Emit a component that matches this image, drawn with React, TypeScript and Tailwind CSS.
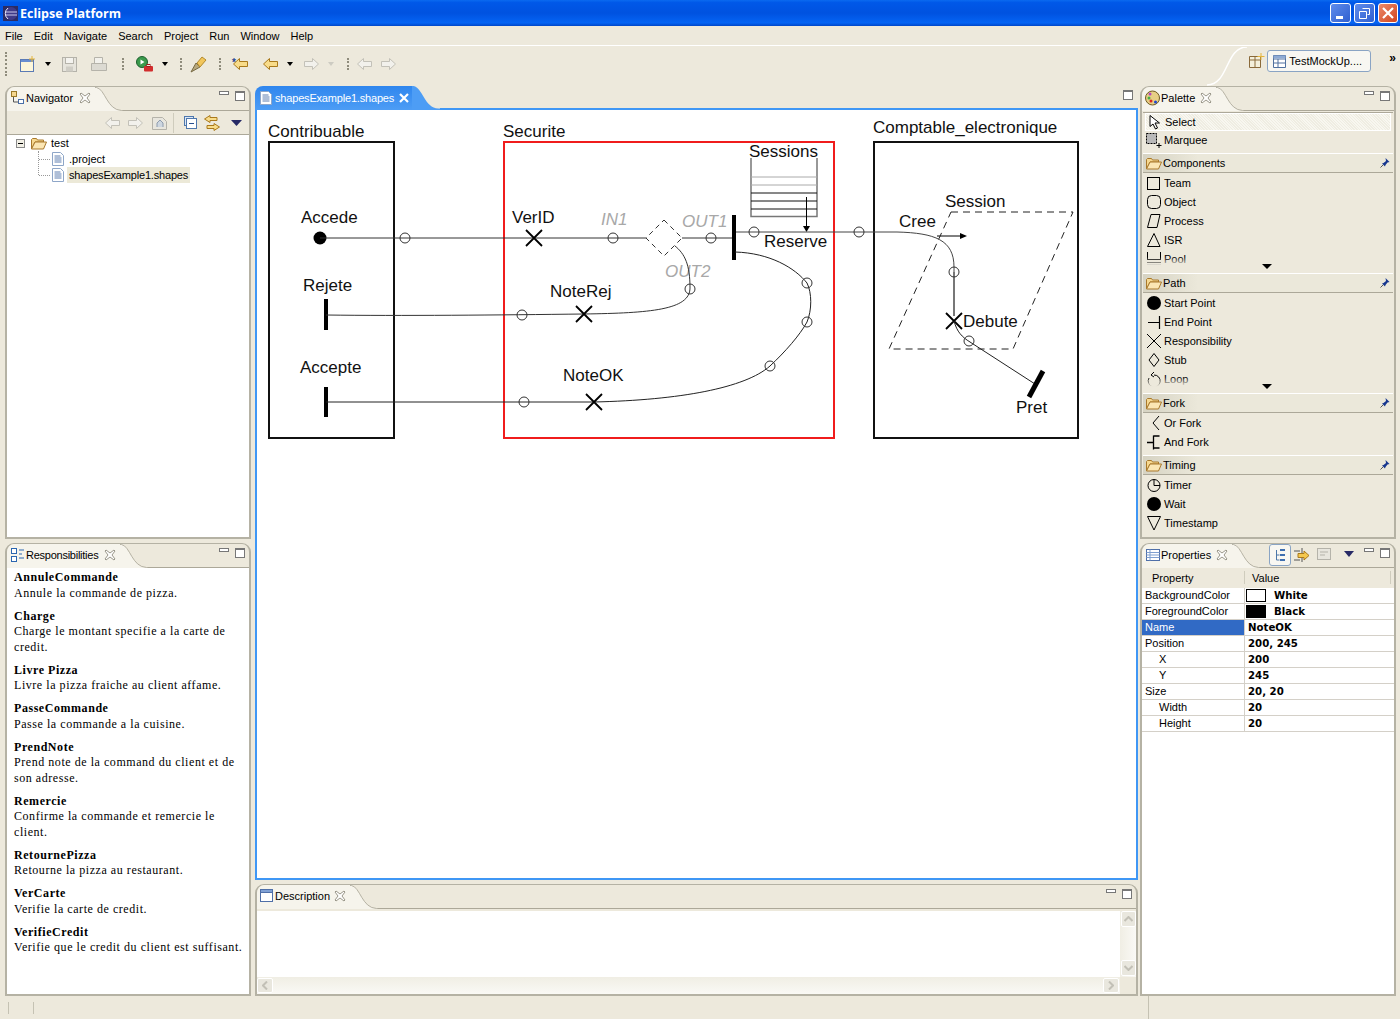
import React from "react";

const Grip = () => (
  <span className="mx-[4px] h-[24px] w-[2px] border-l-2 border-dotted border-[#8f8c7c]" />
);

const DropArrow = ({ color = "#000", w = 6 }: { color?: string; w?: number }) => (
  <svg width={w} height={w > 6 ? 6 : 4} viewBox="0 0 7 4" preserveAspectRatio="none" className="shrink-0">
    <path d="M0 0h7L3.5 4z" fill={color} />
  </svg>
);

const CloseX = () => (
  <svg width="12" height="12" viewBox="0 0 12 12" className="ml-auto shrink-0">
    <path
      d="M1 2l1-1 4 3 4-3 1 1-3 4 3 4-1 1-4-3-4 3-1-1 3-4z"
      fill="#fff"
      stroke="#9a978a"
    />
  </svg>
);

const MinMax = () => (
  <div className="flex items-start gap-[6px]">
    <span className="h-[4px] w-[10px] border border-[#777] bg-white" />
    <span className="h-[10px] w-[10px] border border-[#777] border-t-2 bg-white" />
  </div>
);

const FileIcon = () => (
  <svg width="12" height="14" viewBox="0 0 12 14" className="shrink-0">
    <path d="M.5.5h8l3 3v10H.5z" fill="#fff" stroke="#8ea6c8" />
    <path d="M2.5 4h6M2.5 6h7M2.5 8h7M2.5 10h7" stroke="#5f7fb0" />
  </svg>
);

const Folder = ({ w = 16 }: { w?: number }) => (
  <svg width={w} height="13" viewBox="0 0 16 13" className="shrink-0">
    <path d="M.5 12V2.5l1-1h4l1 1.500h6V5H4L.5 12z" fill="#f6d890" stroke="#a9792c" />
    <path d="M.5 12L4 5h11.500l-3 7z" fill="#fbe6b4" stroke="#a9792c" />
  </svg>
);

const Pin = () => (
  <svg width="10" height="10" viewBox="0 0 10 10" className="shrink-0">
    <path d="M5.500 0l4 4-2 .5-2 2.500-.5 1.500-3-3 1.500-.5L6 3z" fill="#17378f" />
    <path d="M.5 9.500l2.500-2.500" stroke="#555" />
  </svg>
);

const ArrowIcon = ({ dir, fill, stroke }: { dir: "l" | "r"; fill: string; stroke: string }) => (
  <svg width="15" height="12" viewBox="0 0 15 12" className="shrink-0">
    <path
      d={dir === "l" ? "M.5 6L6.500.5V3.500h8v5h-8v3z" : "M14.500 6L8.500.5V3.500h-8v5h8v3z"}
      fill={fill}
      stroke={stroke}
    />
  </svg>
);

const TabHead = ({
  icon,
  label,
  width,
  tight,
  right,
}: {
  icon: React.ReactNode;
  label: string;
  width: number;
  tight?: boolean;
  right?: React.ReactNode;
}) => (
  <div className="flex h-[24px] shrink-0">
    <div
      className="flex h-full items-center rounded-tl-[8px] bg-[#f6f4ec] pb-[3px] pl-[3px] pr-[4px]"
      style={{ width }}
    >
      {icon}
      <span className={`whitespace-nowrap ${tight ? "tracking-[-0.25px]" : ""}`}>{label}</span>
      <CloseX />
    </div>
    <svg width="28" height="24" viewBox="0 0 38 24" preserveAspectRatio="none" className="shrink-0">
      <path d="M0 0H2C14 2 16 23 36 23.500H38V24H0z" fill="#f6f4ec" />
      <path d="M0 .5H2C14 2 16 23 36 23.500H38" fill="none" stroke="#aca899" />
    </svg>
    <div className="flex flex-1 justify-end gap-[8px] rounded-tr-[8px] border-b border-[#aca899] pr-[4px] pt-[4px]">
      {right}
      <MinMax />
    </div>
  </div>
);

const Panel = ({ className, children }: { className: string; children: React.ReactNode }) => (
  <section
    className={`flex flex-col overflow-hidden rounded-t-[9px] border-2 border-t border-[#b5b2a4] ${className}`}
  >
    {children}
  </section>
);

const responsibilities = [
  ["AnnuleCommande", "Annule la commande de pizza."],
  ["Charge", "Charge le montant specifie a la carte de credit."],
  ["Livre Pizza", "Livre la pizza fraiche au client affame."],
  ["PasseCommande", "Passe la commande a la cuisine."],
  ["PrendNote", "Prend note de la command du client et de son adresse."],
  ["Remercie", "Confirme la commande et remercie le client."],
  ["RetournePizza", "Retourne la pizza au restaurant."],
  ["VerCarte", "Verifie la carte de credit."],
  ["VerifieCredit", "Verifie que le credit du client est suffisant."],
];

const B = "#000";

const paletteIcons: Record<string, React.ReactNode> = {
  Team: <rect x="1.500" y="2.500" width="12" height="12" fill="none" stroke={B} />,
  Object: <rect x="1.500" y="1.500" width="13" height="13" rx="4" fill="none" stroke={B} />,
  Process: <path d="M5 1.500h9l-3 13H1.500z" fill="none" stroke={B} />,
  ISR: <path d="M8 1.500l6 13H1.500z" fill="none" stroke={B} />,
  Pool: (
    <>
      <path d="M1.500 1v7M14.500 1v7M1 8.500h14M1 11.500h14" fill="none" stroke={B} />
      <path d="M1 13.500h14M1 15.500h14" stroke="#999" />
    </>
  ),
  "Start Point": <circle cx="8" cy="8" r="7" fill={B} />,
  "End Point": <path d="M2 8.500h12M13.500 2v13" fill="none" stroke={B} strokeWidth="1.200" />,
  Responsibility: <path d="M1 1l14 14M15 1L1 15" fill="none" stroke={B} />,
  Stub: <path d="M8 1.500l5 6.500-5 6.500L3 8z" fill="none" stroke={B} />,
  Loop: <path d="M8 4a6 6 0 1 1-5 3M8 1L5 4l3 2" fill="none" stroke={B} />,
  "Or Fork": <path d="M13 1L7 8l6 7" fill="none" stroke={B} />,
  "And Fork": <path d="M1 8.500h7M7.500 1.500v14M7.500 2h6M7.500 14h6" fill="none" stroke={B} strokeWidth="1.300" />,
  Timer: (
    <>
      <circle cx="8" cy="8.500" r="6" fill="none" stroke={B} />
      <path d="M8 2.500v6h6" fill="none" stroke={B} />
    </>
  ),
  Wait: <circle cx="8" cy="8" r="7" fill={B} />,
  Timestamp: <path d="M1.500 1.500h13L8 15z" fill="none" stroke={B} />,
};

const PaletteHeader = ({ label }: { label: string }) => (
  <div className="flex h-[20px] shrink-0 items-center border-t border-b border-t-white border-b-[#aca899] bg-[linear-gradient(90deg,#d6d3c3_0%,#ebe8da_22%,#ebe8da_100%)] pl-[3px] pr-[3px]">
    <Folder />
    <span className="ml-[1px] flex-1">{label}</span>
    <Pin />
  </div>
);

const PaletteItem = ({ label }: { label: string }) => (
  <div className="flex h-[19px] shrink-0 items-center pl-[3px]">
    <svg width="16" height="16" viewBox="0 0 16 16" className="shrink-0">
      {paletteIcons[label]}
    </svg>
    <span className="ml-[2px]">{label}</span>
  </div>
);

const PaletteDrawer = ({
  label,
  items,
  clipped,
}: {
  label: string;
  items: string[];
  clipped?: boolean;
}) => (
  <>
    <PaletteHeader label={label} />
    <div className={`relative shrink-0 ${clipped ? "h-[100px] overflow-hidden" : "pb-[4px]"}`}>
      {items.map((item) => (
        <PaletteItem key={item} label={item} />
      ))}
      {clipped && (
        <>
          <div className="absolute bottom-0 left-0 right-0 h-[16px] bg-[linear-gradient(180deg,rgba(237,233,220,0)_0%,#ede9dc_60%)]" />
          <div className="absolute bottom-[4px] left-[119px]">
            <svg width="10" height="5" viewBox="0 0 10 5">
              <path d="M0 0h10L5 5z" fill="#000" />
            </svg>
          </div>
        </>
      )}
    </div>
  </>
);

const properties = [
  ["BackgroundColor", "White", "#fff"],
  ["ForegroundColor", "Black", "#000"],
  ["Name", "NoteOK"],
  ["Position", "200, 245"],
  ["X", "200", "", "sub"],
  ["Y", "245", "", "sub"],
  ["Size", "20, 20"],
  ["Width", "20", "", "sub"],
  ["Height", "20", "", "sub"],
];

const Ring = ({ x, y }: { x: number; y: number }) => (
  <circle cx={x} cy={y} r="5" fill="none" stroke="#333" />
);

const Cross = ({ x, y }: { x: number; y: number }) => (
  <path
    d={`M${x - 8} ${y - 8}L${x + 8} ${y + 8}M${x + 8} ${y - 8}L${x - 8} ${y + 8}`}
    stroke="#000"
    strokeWidth="1.800"
  />
);

const Label = ({
  x,
  y,
  children,
  gray,
}: {
  x: number;
  y: number;
  children: string;
  gray?: boolean;
}) => (
  <text
    x={x}
    y={y}
    fontSize="17"
    fill={gray ? "#a8a8a8" : "#111"}
    fontStyle={gray ? "italic" : "normal"}
  >
    {children}
  </text>
);

const Diagram = () => (
  <svg viewBox="257 110 879 768" className="block h-full w-full font-['Liberation_Sans',sans-serif]">
    <rect x="269" y="142" width="125" height="296" fill="none" stroke="#111" strokeWidth="2" />
    <rect x="504" y="142" width="330" height="296" fill="none" stroke="#f01c1c" strokeWidth="2" />
    <rect x="874" y="142" width="204" height="296" fill="none" stroke="#111" strokeWidth="2" />

    <Label x={268} y={137}>Contribuable</Label>
    <Label x={503} y={137}>Securite</Label>
    <Label x={873} y={133}>Comptable_electronique</Label>
    <Label x={301} y={223}>Accede</Label>
    <Label x={303} y={291}>Rejete</Label>
    <Label x={300} y={373}>Accepte</Label>
    <Label x={512} y={223}>VerID</Label>
    <Label x={550} y={297}>NoteRej</Label>
    <Label x={563} y={381}>NoteOK</Label>
    <Label x={749} y={157}>Sessions</Label>
    <Label x={764} y={247}>Reserve</Label>
    <Label x={945} y={207}>Session</Label>
    <Label x={899} y={227}>Cree</Label>
    <Label x={963} y={327}>Debute</Label>
    <Label x={1016} y={413}>Pret</Label>
    <Label x={601} y={225} gray>IN1</Label>
    <Label x={682} y={227} gray>OUT1</Label>
    <Label x={665} y={277} gray>OUT2</Label>

    {/* Accede path */}
    <circle cx="320" cy="238" r="6.500" fill="#000" />
    <path d="M320 238H646M682 238H733" stroke="#333" fill="none" />
    <Ring x={405} y={238} />
    <Cross x={534} y={238} />
    <Ring x={613} y={238} />
    <Ring x={711} y={238} />
    <path d="M664 220L682 238L664 256L646 238Z" fill="#fff" stroke="#333" strokeDasharray="5 4" />
    <rect x="732" y="215" width="4" height="45" fill="#000" />

    {/* Reject path */}
    <rect x="324" y="299" width="4" height="31" fill="#000" />
    <path
      d="M326 315C400 316 500 315 584 314C650 313 690 310 690 288C690 265 685 254 675 246"
      stroke="#333"
      fill="none"
    />
    <Ring x={522} y={315} />
    <Cross x={584} y={314} />
    <Ring x={690} y={289} />

    {/* Accept path */}
    <rect x="324" y="387" width="4" height="30" fill="#000" />
    <path
      d="M326 402H594C680 400 745 388 770 366C785 352 800 335 807 322C812 310 812 293 807 283C795 268 770 253 735 252"
      stroke="#222"
      fill="none"
    />
    <Ring x={524} y={402} />
    <Cross x={594} y={402} />
    <Ring x={770} y={366} />
    <Ring x={807} y={322} />
    <Ring x={807} y={283} />

    {/* Sessions pool */}
    <path d="M751 158V216.500H817V158" fill="none" stroke="#777" strokeWidth="1.500" />
    <path d="M751 177H817M751 185H817" stroke="#aaa" />
    <path d="M751 193H817M751 201H817M751 209H817" stroke="#111" />
    <path d="M806.500 197V226" stroke="#000" />
    <path d="M803 226H810L806.500 232Z" fill="#000" />

    {/* Reserve to Pret */}
    <path d="M736 232H897C935 233 954 240 954 267V316" stroke="#444" fill="none" />
    <path d="M954 272V316" stroke="#777" strokeWidth="2" />
    <Ring x={754} y={232} />
    <Ring x={859} y={232} />
    <path d="M937 236H960" stroke="#000" />
    <path d="M960 233L967 236L960 239Z" fill="#000" />
    <Ring x={954} y={272} />
    <path d="M951 212H1073L1013 349H889Z" fill="none" stroke="#222" strokeDasharray="7 5" />
    <Cross x={954} y={321} />
    <path d="M954 321C957 332 962 337 970 342L1035 384" stroke="#222" fill="none" />
    <Ring x={969} y={341} />
    <path d="M1043 371L1029 397" stroke="#000" strokeWidth="5" />
  </svg>
);

export default function App() {
  return (
    <div className="flex h-[1019px] w-[1400px] flex-col overflow-hidden bg-[#ede9dc] font-['Liberation_Sans',sans-serif] text-[11px] leading-[14px] text-black">
      {/* Title bar */}
      <header className="flex h-[26px] shrink-0 items-center bg-[linear-gradient(180deg,#0a6af0_0%,#0058e8_10%,#0052e0_50%,#0564f4_88%,#0046c8_100%)] pl-[3px] pr-[2px]">
        <svg width="15" height="15" viewBox="0 0 15 15" className="shrink-0">
          <rect width="15" height="15" fill="#2c2c63" />
          <circle cx="8" cy="7.500" r="6.500" fill="#3f3a88" />
          <path d="M2 6h12M2 9h12" stroke="#c9c6ea" />
          <path d="M5 2a7 7 0 0 0 0 11" stroke="#e8e6f5" fill="none" />
        </svg>
        <span className="ml-[2px] flex-1 pt-[1px] font-['Open_Sans',sans-serif] text-[12.5px] font-bold text-white">
          Eclipse Platform
        </span>
        <div className="flex gap-[3px]">
          <button className="flex h-[20px] w-[21px] items-end justify-start rounded-[3px] border border-white bg-[linear-gradient(135deg,#5f8cec,#2f5fd0)] pb-[3px] pl-[5px]">
            <span className="h-[3px] w-[7px] bg-white" />
          </button>
          <button className="flex h-[20px] w-[21px] items-center justify-center rounded-[3px] border border-white bg-[linear-gradient(135deg,#5f8cec,#2f5fd0)]">
            <svg width="11" height="11" viewBox="0 0 11 11">
              <path d="M3.500.5h7v6h-2M.5 3.500h7v7h-7z" fill="none" stroke="#fff" />
            </svg>
          </button>
          <button className="flex h-[20px] w-[20px] items-center justify-center rounded-[3px] border border-white bg-[linear-gradient(135deg,#ec8a6a,#d0451f)]">
            <svg width="12" height="12" viewBox="0 0 12 12">
              <path d="M1 1l10 10M11 1L1 11" stroke="#fff" strokeWidth="2.200" />
            </svg>
          </button>
        </div>
      </header>

      {/* Menu */}
      <nav className="flex h-[19px] shrink-0 items-center gap-[11px] pl-[5px] text-[11px]">
        {["File", "Edit", "Navigate", "Search", "Project", "Run", "Window", "Help"].map((m) => (
          <span key={m}>{m}</span>
        ))}
      </nav>
      <div className="h-px shrink-0 bg-white" />

      {/* Toolbar */}
      <div className="flex h-[40px] shrink-0 items-center pl-[1px]">
        <div className="flex items-center self-stretch pb-[4px]">
          <Grip />
          <svg width="16" height="16" viewBox="0 0 16 16" className="ml-[9px] shrink-0">
            <rect x=".5" y="3.500" width="13" height="12" fill="#fdf6da" stroke="#5a7ab5" />
            <rect x="1" y="4" width="12" height="2" fill="#6a8fd0" />
            <path d="M12 0v6M9 3h6" stroke="#e5b53a" />
          </svg>
          <span className="ml-[9px]"><DropArrow /></span>
          <svg width="15" height="15" viewBox="0 0 15 15" className="ml-[11px] shrink-0">
            <rect x=".5" y=".5" width="14" height="14" fill="#e6e4dc" stroke="#b5b3aa" />
            <rect x="3.500" y=".5" width="8" height="6" fill="#f4f3ef" stroke="#b5b3aa" />
            <rect x="4" y="9.500" width="7" height="5" fill="#cfcdc5" />
          </svg>
          <svg width="16" height="14" viewBox="0 0 16 14" className="ml-[14px] shrink-0">
            <path d="M3.500.5h8v6h-8z" fill="#f2f1ec" stroke="#b5b3aa" />
            <path d="M.5 6.500h15v7H.5z" fill="#dcdad2" stroke="#b5b3aa" />
          </svg>
          <span className="ml-[11px]"><Grip /></span>
          <svg width="17" height="16" viewBox="0 0 17 16" className="ml-[8px] shrink-0">
            <circle cx="6" cy="6" r="5.500" fill="#3b9a4c" stroke="#1d5f2d" />
            <path d="M4.500 3.500l4 2.500-4 2.500z" fill="#fff" />
            <rect x="8" y="10" width="9" height="5.500" rx="1" fill="#d22d2d" />
            <rect x="11" y="8.500" width="3" height="2" fill="none" stroke="#a01b1b" />
          </svg>
          <span className="ml-[9px]"><DropArrow /></span>
          <span className="ml-[8px]"><Grip /></span>
          <svg width="17" height="17" viewBox="0 0 17 17" className="ml-[4px] shrink-0">
            <path d="M1 16l5-9 4 4z" fill="#b7a77c" stroke="#776a44" />
            <path d="M7 7l5-6 4 3-6 7z" fill="#f2c65c" stroke="#b28a2c" />
          </svg>
          <span className="ml-[8px]"><Grip /></span>
          <span className="ml-[7px] flex items-start">
            <span className="-mr-[3px] text-[10px] font-bold leading-[10px] text-[#23408f]">*</span>
            <ArrowIcon dir="l" fill="#f8dc8a" stroke="#a9791c" />
          </span>
          <span className="ml-[15px]"><ArrowIcon dir="l" fill="#f8dc8a" stroke="#a9791c" /></span>
          <span className="ml-[9px]"><DropArrow /></span>
          <span className="ml-[11px]"><ArrowIcon dir="r" fill="#f2f1ec" stroke="#c3c1b8" /></span>
          <span className="ml-[9px]"><DropArrow color="#cdcbc2" /></span>
          <span className="ml-[9px]"><Grip /></span>
          <span className="ml-[4px]"><ArrowIcon dir="l" fill="#f2f1ec" stroke="#c3c1b8" /></span>
          <span className="ml-[9px]"><ArrowIcon dir="r" fill="#f2f1ec" stroke="#c3c1b8" /></span>
        </div>

        {/* Perspective switcher */}
        <div className="ml-auto flex items-center self-stretch">
          <svg width="40" height="39" viewBox="0 0 40 39" className="shrink-0 self-end">
            <path d="M0 38C22 38 18 0 40 0" fill="none" stroke="#fff" strokeWidth="1.500" />
          </svg>
          <div className="flex items-center pb-[10px]">
            <svg width="16" height="16" viewBox="0 0 16 16" className="ml-[2px] shrink-0">
              <path d="M.5 3.500h11v11H.5zM.5 7h11M6 3.500v11" fill="#f4f0dc" stroke="#8a6a3a" />
              <path d="M12 0v7M8.500 3.500h7" stroke="#e5b53a" />
            </svg>
            <div className="ml-[2px] flex h-[22px] w-[104px] items-center rounded-[3px] border border-[#8aa4c4] bg-[#f8f7f2] pl-[5px]">
              <svg width="13" height="13" viewBox="0 0 13 13" className="shrink-0">
                <path d="M.5.5h12v12H.5z" fill="#fff" stroke="#50719f" />
                <path d="M.5 4h12M5 4v8.500M.5 8h12" stroke="#50719f" />
                <rect x=".5" y=".5" width="12" height="3" fill="#8eaad4" />
              </svg>
              <span className="ml-[3px] whitespace-nowrap">TestMockUp....</span>
            </div>
            <span className="ml-[18px] mr-[4px] -mt-[6px] text-[12px] font-bold">»</span>
          </div>
        </div>
      </div>

      {/* Workbench */}
      <main className="flex h-[910px] shrink-0 pl-[5px]">
        <div className="flex w-[246px] shrink-0 flex-col gap-[4px]">
          <Panel className="h-[453px] shrink-0">
            <TabHead
              width={88}
              label="Navigator"
              icon={
                <svg width="16" height="14" viewBox="0 0 16 14" className="shrink-0">
                  <rect x="1.500" y=".5" width="5" height="5" fill="#f6d890" stroke="#9a7a2a" />
                  <rect x="8.500" y="8.500" width="5" height="4" fill="#fff" stroke="#4a6fa8" />
                  <path d="M3.500 6v5h5" fill="none" stroke="#555" />
                </svg>
              }
            />
            <div className="flex h-[24px] shrink-0 items-center justify-end border-b border-[#aca899] pr-[7px]">
              <ArrowIcon dir="l" fill="#f2f1ec" stroke="#c3c1b8" />
              <span className="ml-[8px]"><ArrowIcon dir="r" fill="#f2f1ec" stroke="#c3c1b8" /></span>
              <svg width="15" height="15" viewBox="0 0 15 15" className="ml-[9px] shrink-0">
                <path d="M.5 2.500h10l4 4v8H.5z" fill="#e8e6de" stroke="#b5b3aa" />
                <path d="M5 12V8l3-3 3 3v4" fill="#cdd6e0" stroke="#8e9cae" />
              </svg>
              <span className="ml-[6px] h-[20px] w-px bg-[#cfccbd]" />
              <svg width="13" height="13" viewBox="0 0 13 13" className="ml-[10px] shrink-0">
                <rect x=".5" y=".5" width="9" height="9" fill="#dbe7f6" stroke="#4f78ad" />
                <rect x="2.500" y="2.500" width="10" height="10" fill="#fff" stroke="#4f78ad" />
                <path d="M5 7.500h5" stroke="#27508f" />
              </svg>
              <svg width="16" height="16" viewBox="0 0 16 16" className="ml-[7px] shrink-0">
                <path d="M6 .5L.5 4 6 7.500V5.500h7V2.500H6z" fill="#f8dc8a" stroke="#a9791c" />
                <path d="M10 8.500l5.500 3.500-5.500 3.500v-2H3v-3h7z" fill="#f8dc8a" stroke="#a9791c" />
              </svg>
              <span className="ml-[11px]"><DropArrow color="#272a66" w={11} /></span>
            </div>
            <div className="flex-1 bg-white pl-[9px]">
              <div className="flex h-[16px] items-center">
                <span className="flex h-[9px] w-[9px] items-center justify-center border border-[#8a8a8a] bg-[#f2f0e6]">
                  <span className="h-px w-[5px] bg-black" />
                </span>
                <span className="ml-[6px]"><Folder /></span>
                <span className="ml-[4px]">test</span>
              </div>
              <div className="ml-[22px] h-[24px] border-l border-dotted border-[#999]">
                <div className="ml-[13px] flex h-[16px] items-center">
                  <span className="-ml-[13px] mr-[2px] w-[11px] border-t border-dotted border-[#999]" />
                  <FileIcon />
                  <span className="ml-[5px]">.project</span>
                </div>
                <div className="ml-[13px] flex h-[16px] items-center">
                  <span className="-ml-[13px] mr-[2px] w-[11px] border-t border-dotted border-[#999]" />
                  <FileIcon />
                  <span className="ml-[3px] whitespace-nowrap bg-[#ece9d8] px-[2px] leading-[16px] tracking-[-0.18px]">shapesExample1.shapes</span>
                </div>
              </div>
            </div>
          </Panel>

          <Panel className="h-[453px] shrink-0">
            <TabHead
              width={113}
              tight
              label="Responsibilities"
              icon={
                <svg width="14" height="14" viewBox="0 0 14 14" className="ml-[1px] mr-[1px] shrink-0">
                  <rect x=".5" y=".5" width="5" height="5" fill="#fff" stroke="#2b66b0" />
                  <rect x=".5" y="8.500" width="5" height="5" fill="#fff" stroke="#2b66b0" />
                  <path d="M8 2h5M8 6h3M8 10h5" stroke="#2b66b0" />
                </svg>
              }
            />
            <div className="flex-1 bg-white pl-[7px] pr-[4px] pt-[2px] font-['Liberation_Serif',serif] text-[12px] leading-[15.5px] tracking-[0.55px]">
              {responsibilities.map(([name, text]) => (
                <div key={name} className="mb-[7.5px]">
                  <div className="font-bold">{name}</div>
                  <div>{text}</div>
                </div>
              ))}
            </div>
          </Panel>
        </div>

        <div className="ml-[4px] flex w-[883px] shrink-0 flex-col gap-[4px]">
          {/* Editor */}
          <section className="flex h-[794px] shrink-0 flex-col">
            <div className="flex h-[24px] shrink-0">
              <div className="flex w-[157px] items-center rounded-tl-[8px] bg-[linear-gradient(180deg,#2f86ee_0%,#4d9df5_100%)] pl-[5px] text-white">
                <FileIcon />
                <span className="ml-[3px] whitespace-nowrap tracking-[-0.18px]">shapesExample1.shapes</span>
                <svg width="10" height="10" viewBox="0 0 10 10" className="ml-[5px] shrink-0">
                  <path d="M1 1l8 8M9 1L1 9" stroke="#fff" strokeWidth="2.200" />
                </svg>
              </div>
              <svg width="28" height="24" viewBox="0 0 36 24" preserveAspectRatio="none" className="shrink-0">
                <path d="M0 0H2C14 2 16 22 34 22.500H36V24H0z" fill="#4d9df5" />
              </svg>
              <div className="flex flex-1 justify-end rounded-tr-[8px] border-b-2 border-[#3f97f5] pr-[5px] pt-[4px]">
                <span className="h-[10px] w-[10px] border border-[#777] border-t-2 bg-white" />
              </div>
            </div>
            <div className="min-h-0 flex-1 border-2 border-t-0 border-[#3f97f5] bg-white">
              <Diagram />
            </div>
          </section>

          {/* Description */}
          <Panel className="min-h-0 flex-1">
            <TabHead
              width={93}
              label="Description"
              icon={
                <svg width="13" height="13" viewBox="0 0 13 13" className="mr-[2px] shrink-0">
                  <rect x=".5" y=".5" width="12" height="12" fill="#fff" stroke="#4f6fa8" />
                  <rect x=".5" y=".5" width="12" height="3" fill="#7fa0d4" stroke="#4f6fa8" />
                </svg>
              }
            />
            <div className="grid min-h-0 flex-1 grid-cols-[1fr_16px] grid-rows-[1fr_17px] pt-[2px]">
              <div className="bg-white" />
              <div className="flex flex-col items-center justify-between bg-[linear-gradient(90deg,#f0eee4,#faf9f5)] pb-[1px]">
                <span className="flex h-[16px] w-[15px] items-center justify-center rounded-[2px] border border-white bg-[#e9e7de]">
                  <svg width="9" height="6" viewBox="0 0 9 6"><path d="M.5 5L4.500 1l4 4" fill="none" stroke="#c2c0b6" strokeWidth="2" /></svg>
                </span>
                <span className="flex h-[16px] w-[15px] items-center justify-center rounded-[2px] border border-white bg-[#e9e7de]">
                  <svg width="9" height="6" viewBox="0 0 9 6"><path d="M.5 1L4.500 5l4-4" fill="none" stroke="#c2c0b6" strokeWidth="2" /></svg>
                </span>
              </div>
              <div className="flex items-center justify-between bg-[linear-gradient(180deg,#f0eee4,#faf9f5)] pr-[1px]">
                <span className="flex h-[15px] w-[16px] items-center justify-center rounded-[2px] border border-white bg-[#e9e7de]">
                  <svg width="6" height="9" viewBox="0 0 6 9"><path d="M5 .5L1 4.500l4 4" fill="none" stroke="#c2c0b6" strokeWidth="2" /></svg>
                </span>
                <span className="flex h-[15px] w-[16px] items-center justify-center rounded-[2px] border border-white bg-[#e9e7de]">
                  <svg width="6" height="9" viewBox="0 0 6 9"><path d="M1 .5L5 4.500l-4 4" fill="none" stroke="#c2c0b6" strokeWidth="2" /></svg>
                </span>
              </div>
              <div />
            </div>
          </Panel>
        </div>

        <div className="ml-[2px] flex w-[256px] shrink-0 flex-col gap-[4px]">
          {/* Palette */}
          <Panel className="h-[453px] shrink-0">
            <TabHead
              width={74}
              label="Palette"
              icon={
                <svg width="16" height="16" viewBox="0 0 16 16" className="shrink-0">
                  <ellipse cx="7.500" cy="8" rx="7" ry="7" fill="#e7cf85" stroke="#6f5a22" />
                  <circle cx="5" cy="4" r="1.500" fill="#b445c4" />
                  <circle cx="4" cy="8" r="1.500" fill="#46b04a" />
                  <circle cx="6" cy="11" r="1.500" fill="#e0251f" />
                  <circle cx="10.500" cy="12" r="1.500" fill="#1f45d0" />
                </svg>
              }
            />
            <div className="flex min-h-0 flex-1 flex-col px-[1px] pt-[1px]">
              <div className="shrink-0 border-t border-[#aca899]">
                <div className="mx-[2px] flex h-[18px] items-center border border-white bg-[repeating-linear-gradient(45deg,#f8f7f0_0,#f8f7f0_1px,#efede2_1px,#efede2_2px)] pl-[3px]">
                  <svg width="13" height="15" viewBox="0 0 13 15" className="shrink-0">
                    <path d="M1 .5v11l3-2.500 2.500 5 2-1L6 8h4.500z" fill="#fff" stroke="#000" />
                  </svg>
                  <span className="ml-[3px]">Select</span>
                </div>
                <div className="flex h-[18px] items-center pl-[3px]">
                  <svg width="16" height="15" viewBox="0 0 16 15" className="shrink-0">
                    <rect x=".5" y=".5" width="10" height="10" fill="#b9b9b9" stroke="#000" strokeDasharray="2 1" />
                    <path d="M13 10v5M10.500 12.500h5" stroke="#000" />
                  </svg>
                  <span className="ml-[2px]">Marquee</span>
                </div>
              </div>
              <div className="h-[4px] shrink-0" />
              <PaletteDrawer label="Components" items={["Team", "Object", "Process", "ISR", "Pool"]} clipped />
              <PaletteDrawer
                label="Path"
                items={["Start Point", "End Point", "Responsibility", "Stub", "Loop"]}
                clipped
              />
              <PaletteDrawer label="Fork" items={["Or Fork", "And Fork"]} />
              <PaletteDrawer label="Timing" items={["Timer", "Wait", "Timestamp"]} />
            </div>
          </Panel>

          {/* Properties */}
          <Panel className="h-[453px] shrink-0">
            <TabHead
              width={90}
              label="Properties"
              icon={
                <svg width="14" height="12" viewBox="0 0 14 12" className="ml-[1px] mr-[1px] shrink-0">
                  <rect x=".5" y=".5" width="13" height="11" fill="#fff" stroke="#4f6fa8" />
                  <path d="M.5 3.500h13M.5 6h13M.5 8.500h13M4 .5v11" stroke="#7f9fd0" />
                </svg>
              }
              right={
                <div className="-mt-[4px] flex items-start">
                  <span className="flex h-[22px] w-[22px] items-center justify-center rounded-[3px] border border-[#8aa4c4] bg-[#f8f7f2]">
                    <svg width="11" height="13" viewBox="0 0 11 13">
                      <path d="M1.500 1v10h3M1.500 6h3" fill="none" stroke="#4c77a8" />
                      <path d="M5 1h5M5 6h5M5 11h5" stroke="#3e6fb0" strokeWidth="2" />
                    </svg>
                  </span>
                  <svg width="16" height="15" viewBox="0 0 16 15" className="ml-[3px] mt-[4px] shrink-0">
                    <path d="M0 3h6M0 12h6M8 0v5M8 9v5" stroke="#555" />
                    <path d="M4 5.500h6V3l5 4.500-5 4.500V9.500H4z" fill="#f5c84e" stroke="#a9791c" />
                  </svg>
                  <svg width="14" height="14" viewBox="0 0 14 14" className="ml-[7px] mt-[4px] shrink-0">
                    <rect x=".5" y=".5" width="13" height="11" fill="#e8e6de" stroke="#b5b3aa" />
                    <path d="M3 4h8M3 7h5" stroke="#b5b3aa" />
                  </svg>
                  <span className="ml-[13px] mr-[2px] mt-[7px]"><DropArrow color="#272a66" w={10} /></span>
                </div>
              }
            />
            <div className="flex h-[20px] shrink-0 items-center pb-[1px]">
              <span className="w-[102px] pl-[10px]">Property</span>
              <span className="h-[13px] w-px bg-[#cfccbd]" />
              <span className="flex-1 pl-[7px]">Value</span>
              <span className="mr-[3px] h-[13px] w-px bg-[#cfccbd]" />
            </div>
            <div className="flex-1 bg-white">
              {properties.map(([name, value, swatch, sub]) => (
                <div key={name} className="flex h-[16px] border-b border-[#d4d0c8]">
                  <span
                    className={`flex w-[102px] items-center pb-[1px] ${sub ? "pl-[17px]" : "pl-[3px]"} ${name === "Name" ? "bg-[#316ac5] text-white" : ""}`}
                  >
                    {name}
                  </span>
                  <span className="flex flex-1 items-center border-l border-[#d4d0c8] pl-[3px] font-['DejaVu_Sans',sans-serif] text-[10.2px] font-bold">
                    {swatch ? (
                      <span
                        className="-ml-[2px] mr-[8px] h-[13px] w-[20px] border border-black"
                        style={{ background: swatch }}
                      />
                    ) : null}
                    {value}
                  </span>
                </div>
              ))}
            </div>
          </Panel>
        </div>
      </main>

      {/* Status bar */}
      <footer className="flex min-h-0 flex-1 items-center pl-[8px]">
        <span className="h-[12px] w-px bg-[#c5c2b3]" />
        <span className="ml-[24px] h-[12px] w-px bg-[#c5c2b3]" />
        <span className="ml-[1114px] h-full w-px bg-[#c5c2b3]" />
      </footer>
    </div>
  );
}
